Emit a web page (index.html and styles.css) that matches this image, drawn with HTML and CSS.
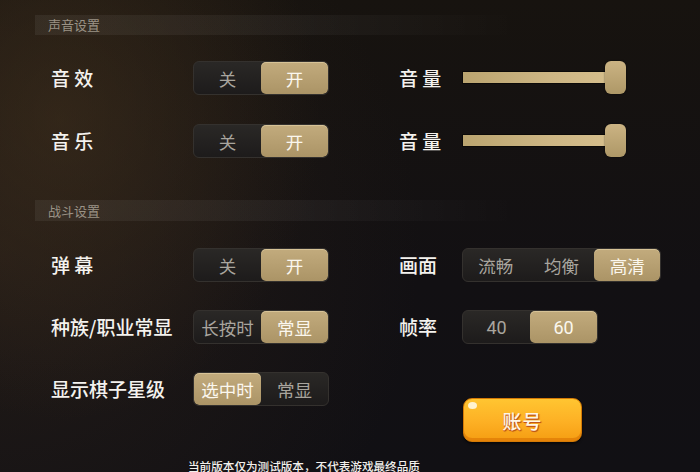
FILE: index.html
```html
<!DOCTYPE html>
<html lang="zh">
<head>
<meta charset="utf-8">
<link rel="stylesheet" href="styles.css">
</head>
<body>
<div class="page">
  <div class="section-head">声音设置</div>
  <div class="grid sound">
    <div class="label">音 效</div>
    <div class="toggle"><span class="seg">关</span><span class="seg on">开</span></div>
    <div class="label">音 量</div>
    <div class="slider"><div class="track"></div><div class="thumb"></div></div>

    <div class="label">音 乐</div>
    <div class="toggle"><span class="seg">关</span><span class="seg on">开</span></div>
    <div class="label">音 量</div>
    <div class="slider"><div class="track"></div><div class="thumb"></div></div>
  </div>

  <div class="section-head second">战斗设置</div>
  <div class="grid battle">
    <div class="label">弹 幕</div>
    <div class="toggle"><span class="seg">关</span><span class="seg on">开</span></div>
    <div class="label">画面</div>
    <div class="toggle three"><span class="seg">流畅</span><span class="seg">均衡</span><span class="seg on">高清</span></div>

    <div class="label">种族/职业常显</div>
    <div class="toggle"><span class="seg">长按时</span><span class="seg on">常显</span></div>
    <div class="label">帧率</div>
    <div class="toggle two"><span class="seg num">40</span><span class="seg num on">60</span></div>

    <div class="label">显示棋子星级</div>
    <div class="toggle"><span class="seg on">选中时</span><span class="seg">常显</span></div>
    <div></div>
    <div class="btn-cell"><button class="account">账号</button></div>
  </div>

  <div class="footer">当前版本仅为测试版本，不代表游戏最终品质</div>
</div>
</body>
</html>
```

FILE: styles.css
```css
html, body {
  margin: 0;
  padding: 0;
}
body {
  width: 700px;
  height: 472px;
  overflow: hidden;
  font-family: "Noto Sans CJK SC", "Noto Sans", sans-serif;
  color: #fff;
  background:
    radial-gradient(ellipse 260px 300px at 60px 120px, rgba(70, 52, 30, 0.5), rgba(40, 30, 22, 0) 100%),
    radial-gradient(ellipse 420px 420px at 0px 250px, rgba(48, 36, 26, 0.55), rgba(20, 17, 18, 0) 100%),
    linear-gradient(180deg, #17130f 0%, #121013 60%, #111014 100%);
}
.page {
  padding: 15px 0 0 35px;
}
.section-head {
  height: 20px;
  line-height: 20px;
  width: 470px;
  padding-left: 13px;
  font-size: 13px;
  color: #9b9386;
  background: linear-gradient(90deg, rgba(255, 255, 255, 0.06) 0%, rgba(255, 255, 255, 0.045) 55%, rgba(255, 255, 255, 0) 100%);
}
.section-head.second {
  margin-top: 42px;
  height: 21px;
  line-height: 21px;
}
.grid {
  display: grid;
  grid-template-columns: 142px 206px 63px auto;
  row-gap: 29px;
  padding-left: 16px;
  align-items: start;
}
.sound {
  margin-top: 26px;
}
.battle {
  margin-top: 27px;
  row-gap: 28px;
}
.label {
  height: 34px;
  line-height: 34px;
  font-size: 19px;
  font-weight: 500;
  color: #f4f2ee;
  white-space: nowrap;
}
.toggle {
  display: flex;
  width: 136px;
  height: 34px;
  box-sizing: border-box;
  border: 1px solid #34312e;
  border-radius: 6px;
  background: linear-gradient(180deg, #2a2826 0%, #1d1b1b 100%);
  overflow: hidden;
}
.toggle.three {
  width: 199px;
}
.toggle.two {
  width: 136px;
}
.seg {
  flex: 1;
  display: flex;
  align-items: center;
  justify-content: center;
  font-size: 17.5px;
  color: #a9a59e;
  border-radius: 5px;
}
.seg.num {
  font-family: "Roboto", "Noto Sans", sans-serif;
  font-size: 18px;
}
.seg.on {
  color: #fbf7ee;
  background: linear-gradient(180deg, #c2ab7d 0%, #ab9466 100%);
  box-shadow: inset 0 1px 0 rgba(255, 240, 200, 0.35);
}
.slider {
  position: relative;
  width: 164px;
  height: 34px;
}
.track {
  position: absolute;
  left: 0;
  top: 10px;
  width: 148px;
  height: 13px;
  box-sizing: border-box;
  border: 1px solid #0c0a08;
  background: linear-gradient(90deg, #bba570 0%, #cdb684 60%, #d5be8c 100%);
}
.thumb {
  position: absolute;
  left: 143px;
  top: 0;
  width: 21px;
  height: 33px;
  border-radius: 6px;
  background: linear-gradient(180deg, #cbb383 0%, #ae9867 100%);
  box-shadow: 0 0 2px rgba(0, 0, 0, 0.6);
}
.btn-cell {
  padding-top: 26px;
}
.account {
  position: relative;
  display: block;
  width: 119px;
  height: 44px;
  margin: 0 0 0 1px;
  padding: 0;
  border: 1px solid #d47a06;
  border-radius: 9px;
  background: linear-gradient(180deg, #ffc531 0%, #fdb024 55%, #f59d12 100%);
  box-shadow: inset 0 -3px 0 rgba(215, 110, 0, 0.55), 0 2px 2px rgba(0, 0, 0, 0.5);
  font-family: "Noto Sans CJK SC", sans-serif;
  font-size: 19px;
  font-weight: 500;
  color: #fff6e6;
  text-shadow: 0 1px 0 #c0561a, 1px 1px 1px #b24a10;
  letter-spacing: 1px;
}
.account::before {
  content: "";
  position: absolute;
  left: 4px;
  top: 3px;
  width: 9px;
  height: 7px;
  border-radius: 50%;
  background: #fff3d0;
}
.footer {
  margin-top: 17px;
  padding-left: 153px;
  font-size: 11.6px;
  line-height: 14px;
  font-weight: 500;
  color: #f2f0ec;
  white-space: nowrap;
}
```
